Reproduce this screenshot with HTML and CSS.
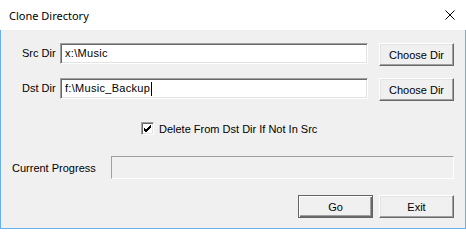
FILE: index.html
```html
<!DOCTYPE html>
<html>
<head>
<meta charset="utf-8">
<title>Clone Directory</title>
<link rel="stylesheet" href="styles.css">
</head>
<body>
<div class="window">
  <div class="titlebar">
    <span class="title">Clone Directory</span>
    <span class="close">
      <svg width="10" height="10" viewBox="0 0 10 10"><path d="M0.5 0.5 L9.5 9.5 M9.5 0.5 L0.5 9.5" stroke="#000" stroke-width="1" fill="none"/></svg>
    </span>
  </div>
  <div class="client">
    <div class="row dir-row">
      <span class="label">Src Dir</span>
      <div class="textbox">x:\Music</div>
      <button class="btn">Choose Dir</button>
    </div>
    <div class="row dir-row second">
      <span class="label">Dst Dir</span>
      <div class="textbox">f:\Music_Backup<span class="caret"></span></div>
      <button class="btn">Choose Dir</button>
    </div>
    <div class="check-row">
      <span class="checkbox">
        <svg width="9" height="9" viewBox="0 0 9 9"><path d="M1 4 L3 6 L8 1 M1 5 L3 7 L8 2 M1 6 L3 8 L8 3" stroke="#000" stroke-width="1" fill="none"/></svg>
      </span>
      <span class="check-label">Delete From Dst Dir If Not In Src</span>
    </div>
    <div class="row progress-row">
      <span class="progress-label">Current Progress</span>
      <div class="progress"></div>
    </div>
    <div class="row action-row">
      <button class="btn default">Go</button>
      <button class="btn">Exit</button>
    </div>
  </div>
  <div class="under"></div>
</div>
</body>
</html>
```
FILE: styles.css
```css
html, body {
  margin: 0;
  padding: 0;
  background: #ffffff;
}
.window {
  width: 466px;
  height: 230px;
  display: flex;
  flex-direction: column;
  font-family: "Liberation Sans", Arial, sans-serif;
  font-size: 11px;
  color: #000;
}
.titlebar {
  height: 30px;
  background: #ffffff;
  display: flex;
  align-items: center;
  justify-content: space-between;
  padding: 0 11px 0 9px;
  flex: none;
}
.title {
  font-family: "Noto Sans", "Open Sans", sans-serif;
  font-size: 11px;
  color: #000;
}
.close {
  display: flex;
  width: 10px;
  height: 10px;
}
.client {
  height: 198px;
  flex: none;
  background: #f0f0f0;
  border: 1px solid #66b0ef;
  border-top: none;
  display: flex;
  flex-direction: column;
}
.under {
  height: 1px;
  background: #ffffff;
}
.row {
  display: flex;
  align-items: flex-start;
}
.dir-row {
  margin-top: 13px;
  padding-left: 21px;
}
.dir-row.second {
  margin-top: 12px;
}
.label {
  width: 38px;
  line-height: 21px;
  flex: none;
}
.textbox {
  width: 308px;
  height: 21px;
  box-sizing: border-box;
  background: #fff;
  border: 1px solid;
  border-color: #a0a0a0 #ffffff #ffffff #a0a0a0;
  box-shadow: inset 1px 1px #696969, inset -1px -1px #e3e3e3;
  padding: 0 3px 0 4px;
  line-height: 19px;
  letter-spacing: 0.3px;
  white-space: nowrap;
  flex: none;
  display: flex;
  align-items: center;
}
.caret {
  display: inline-block;
  width: 1px;
  height: 14px;
  background: #000;
  margin-left: 1px;
}
.btn {
  margin-left: 11px;
  width: 75px;
  height: 23px;
  box-sizing: border-box;
  background: #f0f0f0;
  border: 1px solid;
  border-color: #ffffff #696969 #696969 #ffffff;
  box-shadow: inset -1px -1px #a0a0a0, inset 1px 1px #e3e3e3;
  font-family: "Liberation Sans", Arial, sans-serif;
  font-size: 11px;
  color: #000;
  padding: 0;
  flex: none;
}
.btn.default {
  margin-left: 0;
  border: 1px solid #646464;
  box-shadow: inset 1px 1px #ffffff, inset -1px -1px #696969, inset -2px -2px #a0a0a0;
}
.action-row .btn + .btn {
  margin-left: 6px;
}
.check-row {
  display: flex;
  align-items: center;
  margin-top: 21px;
  padding-left: 140px;
  height: 13px;
}
.checkbox {
  width: 13px;
  height: 13px;
  box-sizing: border-box;
  background: #fff;
  border: 1px solid;
  border-color: #a0a0a0 #ffffff #ffffff #a0a0a0;
  box-shadow: inset 1px 1px #696969, inset -1px -1px #e3e3e3;
  display: flex;
  align-items: center;
  justify-content: center;
  flex: none;
}
.check-label {
  margin-left: 5px;
}
.progress-row {
  margin-top: 21px;
  padding-left: 11px;
  align-items: center;
}
.progress-label {
  width: 99px;
  flex: none;
}
.progress {
  width: 343px;
  height: 23px;
  box-sizing: border-box;
  border: 1px solid;
  border-color: #a0a0a0 #ffffff #ffffff #a0a0a0;
  background: #f0f0f0;
}
.action-row {
  margin-top: 16px;
  justify-content: flex-end;
  padding-right: 11px;
}
```
